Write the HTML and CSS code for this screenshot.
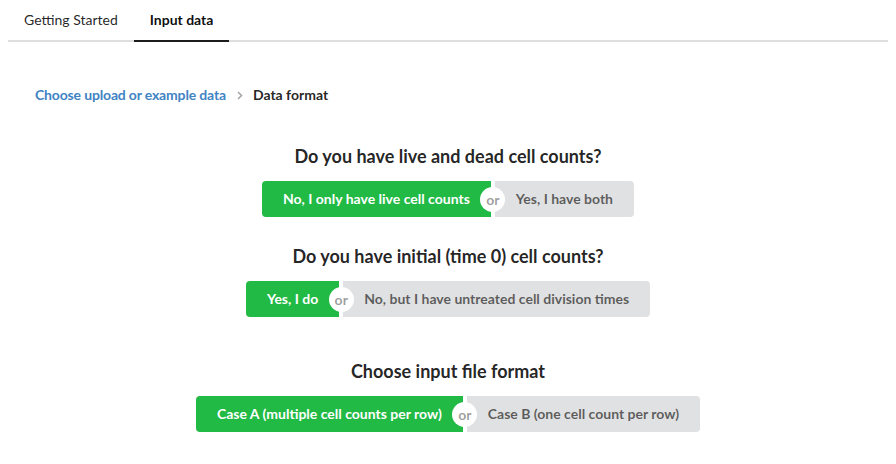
FILE: index.html
```html
<!DOCTYPE html>
<html>
<head>
<meta charset="utf-8">
<link rel="stylesheet" href="styles.css">
</head>
<body>
<div class="menu">
  <a class="item">Getting Started</a>
  <a class="item active">Input data</a>
</div>
<div class="content">
  <div class="breadcrumb">
    <a class="section link">Choose upload or example data</a>
    <svg class="divider" width="6" height="9" viewBox="0 0 6 9"><path d="M1 1l3.5 3.5L1 8" fill="none" stroke="#a6a6a6" stroke-width="1.6"/></svg>
    <span class="section active">Data format</span>
  </div>
  <div class="question first">
    <h3>Do you have live and dead cell counts?</h3>
    <div class="buttons">
      <button class="btn green">No, I only have live cell counts</button>
      <div class="or"><span>or</span></div>
      <button class="btn grey">Yes, I have both</button>
    </div>
  </div>
  <div class="question">
    <h3>Do you have initial (time 0) cell counts?</h3>
    <div class="buttons">
      <button class="btn green">Yes, I do</button>
      <div class="or"><span>or</span></div>
      <button class="btn grey">No, but I have untreated cell division times</button>
    </div>
  </div>
  <div class="question last">
    <h3>Choose input file format</h3>
    <div class="buttons">
      <button class="btn green">Case A (multiple cell counts per row)</button>
      <div class="or"><span>or</span></div>
      <button class="btn grey">Case B (one cell count per row)</button>
    </div>
  </div>
</div>
</body>
</html>
```
FILE: styles.css
```css
html, body {
  margin: 0;
  padding: 0;
  background: #fff;
}
body {
  margin: 0 8px;
  font-family: Lato, "Helvetica Neue", Arial, sans-serif;
  font-size: 14px;
  line-height: 1.4285em;
  color: rgba(0,0,0,0.87);
}
.menu {
  display: flex;
  border-bottom: 2px solid rgba(34,36,38,0.15);
}
.menu .item {
  padding: 13px 16px;
  line-height: 1;
  margin-bottom: -2px;
  border-bottom: 2px solid transparent;
  color: rgba(0,0,0,0.87);
}
.menu .item.active {
  font-weight: 700;
  color: rgba(0,0,0,0.95);
  border-color: #1b1c1d;
}
.content {
  padding: 0 27px;
}
.breadcrumb {
  display: flex;
  align-items: center;
  margin-top: 46px;
  line-height: 1;
  font-weight: 700;
}
.breadcrumb .link {
  color: #4183c4;
  letter-spacing: -0.16px;
}
.breadcrumb .divider {
  margin: 0 10px 0 11px;
}
.breadcrumb .active {
  color: rgba(0,0,0,0.87);
}
.question {
  display: flex;
  flex-direction: column;
  align-items: center;
  margin-top: 28px;
}
.question.first {
  margin-top: 43px;
}
.question.last {
  margin-top: 43px;
}
h3 {
  margin: 0 0 13px;
  font-size: 18px;
  line-height: 1.2857em;
  font-weight: 700;
  color: rgba(0,0,0,0.87);
}
.buttons {
  display: flex;
  align-items: stretch;
}
.btn {
  font-family: Lato, "Helvetica Neue", Arial, sans-serif;
  font-size: 14px;
  font-weight: 700;
  line-height: 14px;
  height: 36px;
  padding: 11px 21px;
  border: none;
  margin: 0;
}
.btn.green {
  background: #21ba45;
  color: #fff;
  border-radius: 4px 0 0 4px;
}
.btn.grey {
  background: #e0e1e2;
  color: rgba(0,0,0,0.6);
  border-radius: 0 4px 4px 0;
}
.or {
  position: relative;
  width: 4px;
  z-index: 3;
}
.or span {
  position: absolute;
  top: 50%;
  left: 50%;
  width: 25px;
  height: 25px;
  margin: -12.5px 0 0 -12.5px;
  border-radius: 50%;
  background: #fff;
  text-align: center;
  line-height: 25px;
  font-weight: 700;
  color: rgba(0,0,0,0.4);
}
```
